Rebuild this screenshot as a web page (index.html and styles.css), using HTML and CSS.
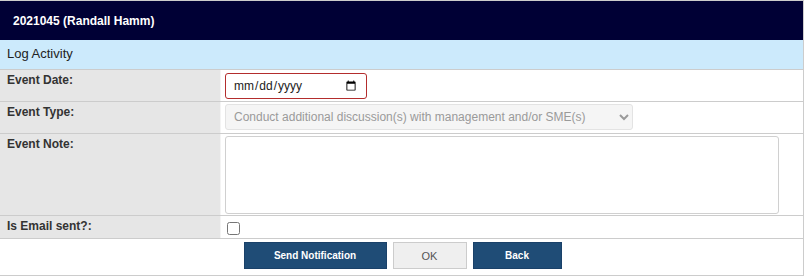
FILE: index.html
```html
<!DOCTYPE html>
<html lang="en">
  <head>
    <meta charset="UTF-8" />
    <meta name="viewport" content="width=device-width, initial-scale=1.0" />
    <title>Log Activity</title>
    <link rel="stylesheet" href="styles.css">
  </head>
  <body>
    <div class="panel">
      <div class="panel-header">2021045 (Randall Hamm)</div>
      <div class="panel-sub">Log Activity</div>

      <div class="form-row row-date">
        <div class="form-label">Event Date:</div>
        <div class="form-value">
          <input type="date" class="date-input" />
        </div>
      </div>

      <div class="form-row row-type">
        <div class="form-label">Event Type:</div>
        <div class="form-value">
          <select class="type-select" disabled>
            <option>Conduct additional discussion(s) with management and/or SME(s)</option>
          </select>
        </div>
      </div>

      <div class="form-row row-note">
        <div class="form-label">Event Note:</div>
        <div class="form-value">
          <textarea class="note-input"></textarea>
        </div>
      </div>

      <div class="form-row row-email">
        <div class="form-label">Is Email sent?:</div>
        <div class="form-value">
          <input type="checkbox" class="email-check" />
        </div>
      </div>

      <div class="button-row">
        <button class="btn btn-primary btn-send">Send Notification</button>
        <button class="btn btn-default btn-ok">OK</button>
        <button class="btn btn-primary btn-back">Back</button>
      </div>
    </div>
  </body>
</html>
```

FILE: styles.css
```css
body {
  margin: 0;
  font-family: "Liberation Sans", Arial, sans-serif;
  font-size: 12px;
  color: #222;
}
.panel {
  width: 804px;
  height: 276px;
  box-sizing: border-box;
  border: 1px solid #cccccc;
  border-left: 0;
}
.panel-header {
  height: 39px;
  display: flex;
  align-items: center;
  padding-left: 13px;
  background-color: #000035;
  color: white;
  font-weight: bold;
  font-size: 12px;
}
.panel-sub {
  height: 30px;
  box-sizing: border-box;
  padding: 6px 7px 0;
  background-color: #cceafc;
  border-bottom: 1px solid #cccccc;
  font-size: 13px;
  color: #222;
}
.form-row {
  display: grid;
  grid-template-columns: 221px 1fr;
  border-bottom: 1px solid #cccccc;
}
.row-date { height: 31px; }
.row-type { height: 31px; }
.row-note { height: 81px; }
.row-email { height: 22px; }
.form-label {
  background-color: #e6e6e6;
  border-right: 1px solid #f4f4f4;
  padding: 3px 7px 0;
  font-weight: bold;
  color: #333;
}
.form-value {
  padding: 2px 4px 0;
}
.date-input {
  box-sizing: border-box;
  width: 142px;
  height: 26px;
  margin-top: 1px;
  padding: 0 7px;
  border: 1px solid #b32d2d;
  border-radius: 3px;
  font-family: "Liberation Sans", Arial, sans-serif;
  font-size: 12px;
  color: #222;
}
.type-select {
  box-sizing: border-box;
  width: 408px;
  height: 26px;
  padding: 0 4px;
  border: 1px solid #e3e3e3;
  border-radius: 3px;
  background-color: #f5f5f5;
  font-family: "Liberation Sans", Arial, sans-serif;
  font-size: 12px;
  color: #9a9a9a;
  opacity: 1;
}
.note-input {
  box-sizing: border-box;
  width: 554px;
  height: 78px;
  border: 1px solid #d0d0d0;
  border-radius: 3px;
  resize: none;
  display: block;
}
.email-check {
  width: 13px;
  height: 13px;
  margin: 4px 0 0 2px;
}
.button-row {
  height: 35px;
  display: flex;
  justify-content: center;
  align-items: flex-start;
  gap: 6px;
  padding: 3px 0 0 2px;
  box-sizing: border-box;
}
.btn {
  height: 27px;
  border-radius: 0;
  font-family: "Liberation Sans", Arial, sans-serif;
  font-size: 10px;
  font-weight: bold;
  cursor: pointer;
}
.btn-primary {
  background-color: #1f4c76;
  border: 1px solid #1a4169;
  color: white;
}
.btn-default {
  background-color: #efefef;
  border: 1px solid #cccccc;
  color: #555;
  font-weight: normal;
  font-size: 11px;
}
.btn-send { width: 143px; }
.btn-ok { width: 74px; }
.btn-back { width: 89px; }
```
